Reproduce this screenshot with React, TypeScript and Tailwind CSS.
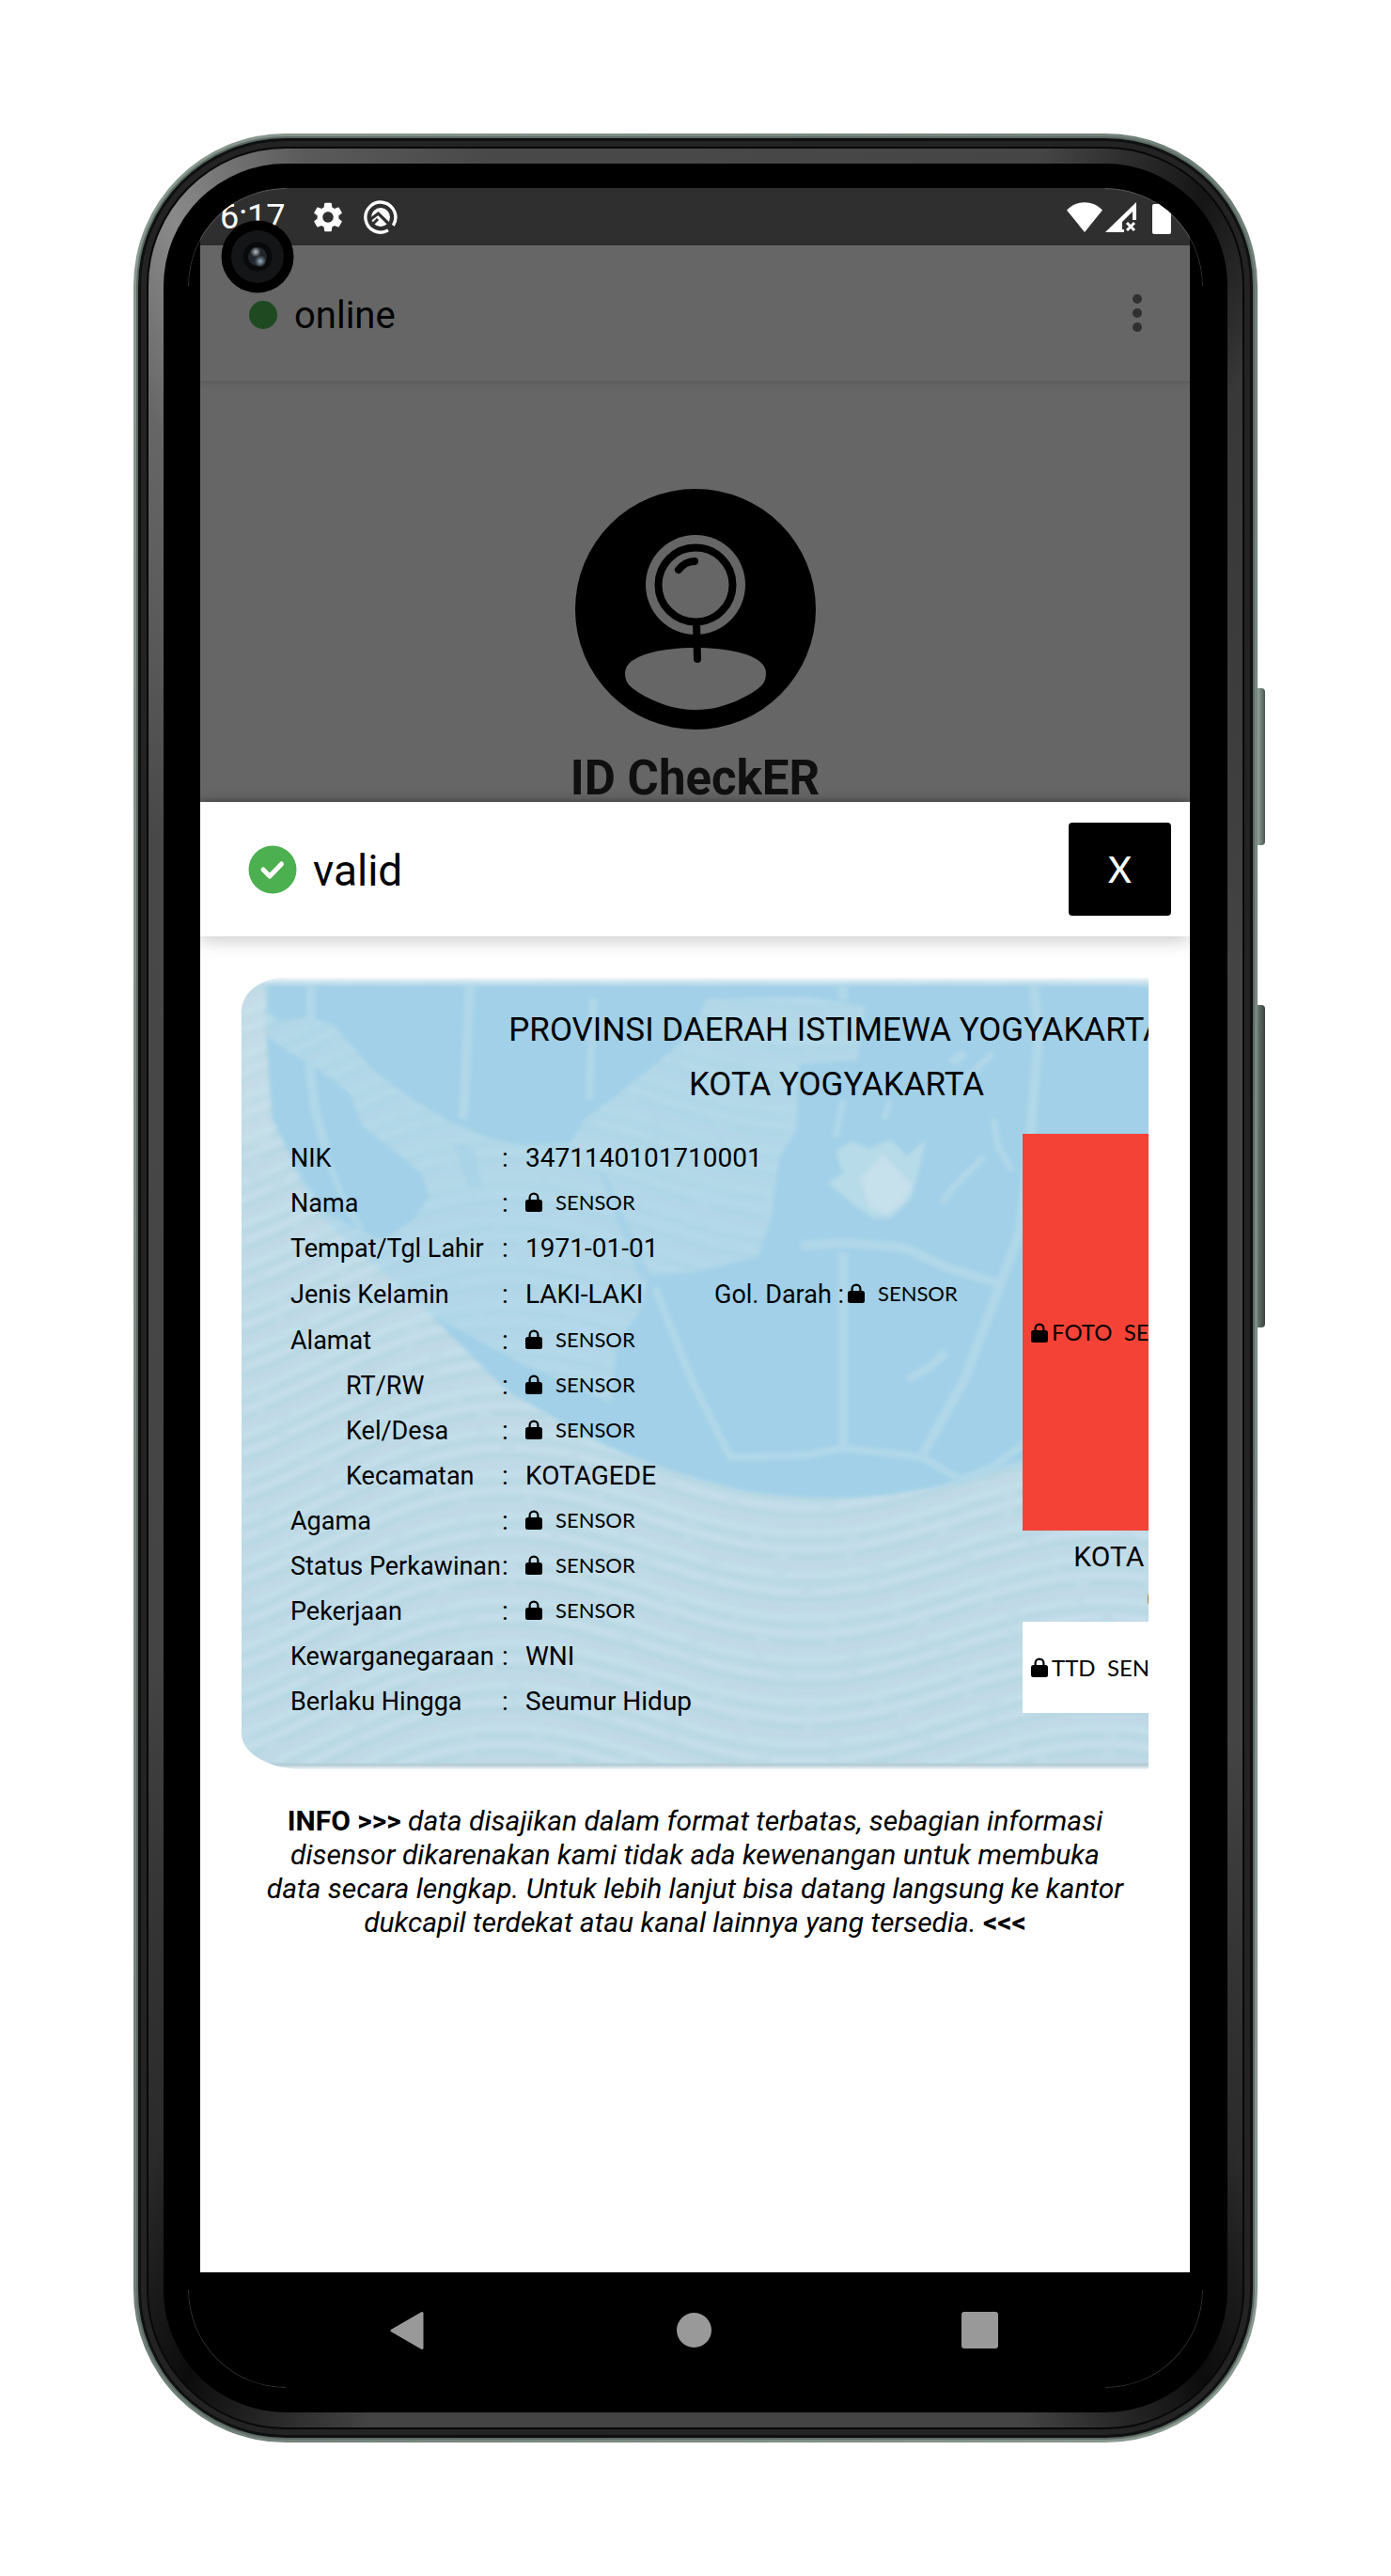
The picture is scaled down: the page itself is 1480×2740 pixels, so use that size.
import React from "react";
import { MdSettings } from "react-icons/md";

const WAVES = Array.from({ length: 110 }, (_, i) => {
  const y0 = -60 + i * 9;
  const points: string[] = [];
  for (let x = 0; x <= 1270; x += 15) {
    const y = y0 + 38 * Math.cos(((x - 600) / 340) * Math.PI) + 0.00012 * (x - 600) * (x - 600);
    points.push(`${x},${Math.round(y)}`);
  }
  return points.join(" ");
});

const WAVE_COLORS = ["#c8e0ec", "#b3d5e0", "#c2d7e5", "#c6e2ec", "#b5d7e1"];

function LockIcon() {
  return (
    <svg viewBox="0 0 18 21" className="h-[21px] w-[18px] shrink-0" aria-hidden="true">
      <rect x="0" y="8" width="18" height="13" rx="2.5" fill="#000" />
      <path d="M4.6 9V6a4.4 4.4 0 0 1 8.8 0v3" fill="none" stroke="#000" strokeWidth="2.2" />
    </svg>
  );
}

function Censored() {
  return (
    <span className="flex items-center gap-[14px] pb-[3px]">
      <LockIcon />
      <span className="font-['Lato',sans-serif] text-[22px]">SENSOR</span>
    </span>
  );
}

function CardBackdrop() {
  return (
    <svg
      viewBox="0 0 1266 842"
      preserveAspectRatio="none"
      className="absolute inset-0 h-full w-full"
      aria-hidden="true"
    >
      <defs>
        <filter id="soft" x="-5%" y="-5%" width="110%" height="110%">
          <feGaussianBlur stdDeviation="2" />
        </filter>
        <linearGradient id="topFade" x1="0" y1="0" x2="0" y2="1">
          <stop offset="0" stopColor="#f4f9fb" />
          <stop offset="1" stopColor="#a6d1e6" stopOpacity="0" />
        </linearGradient>
        <linearGradient id="bottomFade" x1="0" y1="0" x2="0" y2="1">
          <stop offset="0" stopColor="#b3cfda" stopOpacity="0" />
          <stop offset="0.4" stopColor="#b3c9d3" />
          <stop offset="1" stopColor="#f4f8fa" />
        </linearGradient>
      </defs>
      <rect width="1266" height="842" fill="#bfdbe7" />
      <g filter="url(#soft)" fill="none" strokeWidth="5" opacity="0.75">
        {WAVES.map((points, i) => (
          <polyline
            key={i}
            points={points}
            stroke={WAVE_COLORS[i % 5]}
            strokeDasharray={i % 2 ? "90 14 60 10" : undefined}
            strokeDashoffset={i * 37}
          />
        ))}
      </g>
      <path
        d="M27 6H900V500L744 540Q640 562 540 546Q420 520 337 470L200 357L86 257Q36 190 27 60Z"
        fill="#a6d5ea"
        opacity="0.5"
        filter="url(#soft)"
      />
      <g filter="url(#soft)" fill="#a1d0e8">
        <path d="M28 8H500L480 58L440 92L395 128L365 150L350 176L300 178L262 170L220 152L180 128L140 98L98 50L70 42L40 46L28 36Z" />
        <path d="M27 62L52 80L83 98L116 124L128 157L160 182L190 207L200 232L183 257L150 278L130 270L92 252L60 205L33 150Z" />
        <path d="M480 8H1266V400L960 480L831 513L744 540Q640 562 540 546Q420 520 337 470L283 440L200 357L300 412L393 452L400 385L423 357L433 317L483 313L550 297L563 257L573 190L590 163L593 92L656 87L664 30L600 20L496 22Z" />
        <path d="M380 205L388 210L436 318L424 322Z" opacity="0.7" />
        <path d="M225 175L248 182L256 222L240 222Z" opacity="0.5" />
      </g>
      <g filter="url(#soft)" fill="none" stroke="#b1d8e9" strokeWidth="10" strokeLinejoin="round">
        <path d="M74 8V52M72 90L78 140L90 182" />
        <path d="M243 8L236 150" />
        <path d="M374 22L370 130" strokeWidth="8" />
        <path d="M640 8V24" />
        <path d="M843 8L848 60L840 160L828 270L806 330L768 430L725 506" />
        <path d="M640 292V500" />
        <path d="M595 285L640 282L705 287L750 308L805 325" />
        <path d="M90 190L110 240L128 268" strokeWidth="6" />
        <path d="M440 330L480 430L520 510L600 508L640 500L725 510L765 534L800 520L840 490" strokeWidth="8" />
        <path d="M708 428L735 412L750 398" strokeWidth="9" />
        <path d="M745 240L758 222L790 190M800 150L805 180L820 205" strokeWidth="7" />
        <path d="M690 130L684 150M640 130L632 170M800 80L770 108" strokeWidth="7" />
      </g>
      <g filter="url(#soft)">
        <path
          d="M623 218L640 208L632 184L650 174L668 182L690 172L708 190L728 172L722 200L712 236L690 256L672 256L650 240Z"
          fill="#b7dbe8"
        />
        <path d="M658 214L682 188L700 206L714 222L704 240L686 252L668 244Z" fill="#c6e0ec" />
        <path d="M752 86L768 76L772 84L758 94Z" fill="#b1d8e9" />
      </g>
      <path d="M0 6H24Q24 120 34 180L0 180Z" fill="#cfe3ec" opacity="0.35" filter="url(#soft)" />
      <rect width="1266" height="12" fill="url(#topFade)" />
      <rect y="834" width="1266" height="8" fill="url(#bottomFade)" />
    </svg>
  );
}

type Field = { label: string; value?: string; indent?: boolean; blood?: boolean };

const FIELDS: Field[] = [
  { label: "NIK", value: "3471140101710001" },
  { label: "Nama" },
  { label: "Tempat/Tgl Lahir", value: "1971-01-01" },
  { label: "Jenis Kelamin", value: "LAKI-LAKI", blood: true },
  { label: "Alamat" },
  { label: "RT/RW", indent: true },
  { label: "Kel/Desa", indent: true },
  { label: "Kecamatan", value: "KOTAGEDE", indent: true },
  { label: "Agama" },
  { label: "Status Perkawinan" },
  { label: "Pekerjaan" },
  { label: "Kewarganegaraan", value: "WNI" },
  { label: "Berlaku Hingga", value: "Seumur Hidup" },
];

function FieldRow({ label, value, indent, blood }: Field) {
  return (
    <div className={blood ? "flex h-[50px] items-center" : "flex h-12 items-center"}>
      <dt className={indent ? "w-[225px] pl-[59px] text-[27px]" : "w-[225px] text-[27px] whitespace-nowrap"}>
        {label}
      </dt>
      <span className="w-[25px]">:</span>
      <dd className="flex items-center">
        <span className={blood ? "w-[201px]" : ""}>{value ?? <Censored />}</span>
        {blood && (
          <span className="flex items-center gap-1">
            <span className="text-[27px]">Gol. Darah :</span>
            <Censored />
          </span>
        )}
      </dd>
    </div>
  );
}

function IdentityCard() {
  return (
    <section
      aria-label="Kartu identitas"
      className="overflow-hidden [border-top-left-radius:46px_36px] [border-bottom-left-radius:66px_38px]"
    >
      <div className="relative min-w-[1266px]">
        <CardBackdrop />
        <div className="relative pt-[27px] pb-12">
          <h2 className="text-center text-[35px] leading-[58px]">
            PROVINSI DAERAH ISTIMEWA YOGYAKARTA
            <br />
            KOTA YOGYAKARTA
          </h2>
          <div className="mt-[23px] flex">
            <dl className="w-[831px] shrink-0 pt-[2px] pl-[52px] text-[28px]">
              {FIELDS.map((field) => (
                <FieldRow key={field.label} {...field} />
              ))}
            </dl>
            <div className="w-[378px] shrink-0">
              <div className="flex h-[422px] items-center gap-1 bg-[#f44336] pl-[9px]">
                <LockIcon />
                <span className="font-['Lato',sans-serif] text-[24px] whitespace-pre">FOTO  SENSOR</span>
              </div>
              <div className="h-[97px] pt-[5px] text-center text-[30px] leading-[46px]">
                <p>KOTA YOGYAKARTA</p>
                <p className="pl-[132px] text-left text-[28px]">01-01</p>
              </div>
              <div className="flex h-[97px] items-center gap-1 bg-white pl-[9px]">
                <LockIcon />
                <span className="font-['Lato',sans-serif] text-[24px] whitespace-pre">TTD  SENSOR</span>
              </div>
            </div>
          </div>
        </div>
      </div>
    </section>
  );
}

function StatusBar() {
  return (
    <div className="flex h-[61px] items-center bg-[#2f2f2f] pr-5 pl-[21px] text-white">
      <span className="w-[96px] text-[36px]">6:17</span>
      <MdSettings className="h-[38px] w-[38px]" aria-hidden="true" />
      <svg viewBox="0 0 36 36" className="ml-[19px] h-9 w-9" aria-hidden="true">
        <path d="M31.3 26.8A16 16 0 1 0 26 31.900" fill="none" stroke="#fff" strokeWidth="3.4" />
        <circle cx="18" cy="18" r="10" fill="#fff" />
        <path d="M7 20.500L15.500 14L30 28.500" fill="none" stroke="#2f2f2f" strokeWidth="3.2" />
        <path d="M9 26L15 20" stroke="#2f2f2f" strokeWidth="3" />
      </svg>
      <div className="ml-auto flex items-center">
        <svg viewBox="0 0 38 32" className="h-8 w-[38px]" aria-hidden="true">
          <path d="M0 8.5C10-2.6 28-2.6 38 8.5L19 32Z" fill="#fff" />
        </svg>
        <svg viewBox="0 0 34 34" className="ml-[3px] h-[34px] w-[34px]" aria-hidden="true">
          <path d="M0 33L33 1V20H29V11L18 22V30H20V33Z" fill="#fff" />
          <path d="M23 23L31 31M31 23L23 31" stroke="#fff" strokeWidth="3" />
        </svg>
        <svg viewBox="0 0 20 36" className="ml-4 h-9 w-5" aria-hidden="true">
          <path d="M6 0H14V4H18Q20 4 20 6V34Q20 36 18 36H2Q0 36 0 34V6Q0 4 2 4H6Z" fill="#fff" />
        </svg>
      </div>
    </div>
  );
}

function Camera() {
  return (
    <svg
      viewBox="0 0 78 78"
      className="absolute top-[34px] left-[35px] h-[78px] w-[78px]"
      aria-hidden="true"
    >
      <defs>
        <radialGradient id="glintA">
          <stop offset="0" stopColor="#b9bec4" />
          <stop offset="1" stopColor="#b9bec4" stopOpacity="0" />
        </radialGradient>
        <radialGradient id="glintB">
          <stop offset="0" stopColor="#9db1bf" />
          <stop offset="1" stopColor="#7b93a3" stopOpacity="0" />
        </radialGradient>
      </defs>
      <circle cx="39" cy="39" r="38.5" fill="#000" />
      <circle cx="39" cy="39" r="28" fill="#141517" />
      <circle cx="39" cy="39" r="15.5" fill="#08090b" />
      <circle cx="39" cy="39" r="10" fill="#20262b" />
      <circle cx="37" cy="34" r="5.5" fill="url(#glintA)" />
      <circle cx="42" cy="44" r="6.5" fill="url(#glintB)" />
    </svg>
  );
}

function AppHeader() {
  return (
    <header className="flex h-36 items-center justify-between bg-[#666] pr-[51px] pl-[52px] shadow-[0_2px_8px_rgba(0,0,0,0.15)]">
      <div className="flex items-center gap-[18px]">
        <span className="mt-1 h-[30px] w-[30px] rounded-full bg-[#1f4a21]" />
        <span className="pt-[6px] text-[40px]">online</span>
      </div>
      <button type="button" aria-label="Menu" className="flex flex-col items-center gap-[5px]">
        <span className="h-[10px] w-[10px] rounded-full bg-[#303030]" />
        <span className="h-[10px] w-[10px] rounded-full bg-[#303030]" />
        <span className="h-[10px] w-[10px] rounded-full bg-[#303030]" />
      </button>
    </header>
  );
}

function Logo() {
  return (
    <svg viewBox="0 0 256 256" className="h-64 w-64" aria-hidden="true">
      <circle cx="128" cy="128" r="128" fill="#000" />
      <circle cx="128" cy="102" r="53" fill="#666" />
      <path
        d="M128 169C162 169 203 176 203 196C203 207 197 211 188 217C171 227 152 235 128 235C104 235 85 227 68 217C59 211 53 207 53 196C53 176 94 169 128 169Z"
        fill="#666"
      />
      <circle cx="128" cy="102" r="39.5" fill="none" stroke="#000" strokeWidth="8" />
      <path
        d="M129 143L130 181M110 86Q117 77 127 77"
        fill="none"
        stroke="#000"
        strokeWidth="8"
        strokeLinecap="round"
      />
    </svg>
  );
}

function ResultSheet() {
  return (
    <section className="min-h-[1564px] bg-white shadow-[0_0_8px_rgba(0,0,0,0.4)]">
      <header className="flex h-[143px] items-center justify-between pr-5 pl-[51px] shadow-[0_4px_18px_rgba(0,0,0,0.22)]">
        <div className="flex items-center gap-[17px]">
          <svg viewBox="0 0 52 52" className="h-[52px] w-[52px]" aria-hidden="true">
            <circle cx="26" cy="26" r="25.5" fill="#4caf50" />
            <path
              d="M16 26L23 33L35.500 20"
              fill="none"
              stroke="#fff"
              strokeWidth="5"
              strokeLinecap="round"
              strokeLinejoin="round"
            />
          </svg>
          <span className="pt-1 text-[46px]">valid</span>
        </div>
        <button
          type="button"
          className="h-[99px] w-[109px] rounded-[4px] bg-black font-['Lato',sans-serif] text-[38px] font-medium text-white"
        >
          X
        </button>
      </header>
      <div className="px-11 pt-11">
        <IdentityCard />
        <p className="mx-auto max-w-[940px] pt-[37px] text-center text-[30px] leading-9 italic">
          <strong className="font-bold not-italic">INFO &gt;&gt;&gt;</strong> data disajikan dalam format terbatas,
          sebagian informasi disensor dikarenakan kami tidak ada kewenangan untuk membuka
          <br />
          data secara lengkap. Untuk lebih lanjut bisa datang langsung ke kantor dukcapil terdekat atau kanal lainnya
          yang tersedia. <strong className="font-bold not-italic">&lt;&lt;&lt;</strong>
        </p>
      </div>
    </section>
  );
}

function NavBar() {
  return (
    <nav className="flex h-[123px] items-center justify-center gap-[266px] bg-black pr-1">
      <button type="button" aria-label="Kembali">
        <svg viewBox="0 0 40 42" className="h-[42px] w-10">
          <path
            d="M3 21L35 2.500V39.500Z"
            fill="#999"
            stroke="#999"
            strokeWidth="3"
            strokeLinejoin="round"
          />
        </svg>
      </button>
      <button type="button" aria-label="Beranda" className="h-[37px] w-[37px] rounded-full bg-[#999]" />
      <button type="button" aria-label="Terbaru" className="h-[39px] w-[39px] rounded-[3px] bg-[#999]" />
    </nav>
  );
}

export default function App() {
  return (
    <main className="min-h-screen bg-white px-[142px] py-[142px] font-['Roboto',sans-serif] text-black">
      <div className="relative">
        <span className="absolute top-[590px] -right-2 h-[167px] w-4 rounded-r-[4px] bg-linear-to-r from-[#55605b] via-[#94a59c] to-[#4b5752]" />
        <span className="absolute top-[927px] -right-2 h-[343px] w-4 rounded-r-[4px] bg-linear-to-r from-[#39413d] via-[#68766f] to-[#3a433f]" />
        <div className="relative rounded-[162px] bg-linear-to-br from-[#8a9a91] via-[#6f7f77] to-[#8a9a91] p-[3px]">
          <div className="rounded-[159px] bg-[#5d6b64] p-[2px]">
            <div className="rounded-[157px] bg-[#0e1011] p-[3px]">
              <div className="rounded-[154px] bg-[#232323] p-[6px]">
                <div className="rounded-[148px] bg-[#080808] p-[2px]">
                  <div className="rounded-[146px] bg-[conic-gradient(#484848_0deg,#454545_17deg,#151515_25deg,#383838_31deg,#444_60deg,#444_130deg,#2b2b2b_148deg,#0c0c0c_155deg,#444_164deg,#444_196deg,#0c0c0c_205deg,#2b2b2b_212deg,#444_235deg,#484848_310deg,#666_328deg,#8a8a8a_334deg,#5a5a5a_341deg,#484848_350deg)] p-4">
                    <div className="rounded-[130px] bg-black py-[26px] pr-[26px] pl-[26px]">
                      <div className="relative overflow-hidden rounded-[104px] bg-black pr-[14px] pl-[13px]">
                        <StatusBar />
                        <div className="bg-[#666]">
                          <AppHeader />
                          <div className="flex flex-col items-center pt-[115px]">
                            <Logo />
                            <h1 className="mt-[26px] text-[51px] leading-[51px] font-bold text-[#0f0f0f]">ID CheckER</h1>
                          </div>
                          <ResultSheet />
                        </div>
                        <NavBar />
                        <Camera />
                        <span className="absolute top-0 left-0 h-[104px] w-[104px] rounded-tl-[104px] border-t border-l border-white/20" />
                        <span className="absolute top-0 right-0 h-[104px] w-[104px] rounded-tr-[104px] border-t border-r border-white/20" />
                        <span className="absolute bottom-0 left-0 h-[104px] w-[104px] rounded-bl-[104px] border-b border-l border-white/20" />
                        <span className="absolute right-0 bottom-0 h-[104px] w-[104px] rounded-br-[104px] border-r border-b border-white/20" />
                      </div>
                    </div>
                  </div>
                </div>
              </div>
            </div>
          </div>
        </div>
      </div>
    </main>
  );
}
